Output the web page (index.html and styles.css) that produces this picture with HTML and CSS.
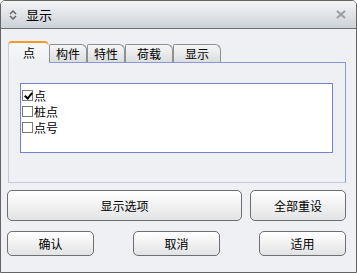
FILE: index.html
```html
<!DOCTYPE html>
<html lang="zh">
<head>
    <meta charset="UTF-8">
    <title>显示</title>
    <link rel="stylesheet" href="styles.css">
</head>
<body>
<div class="ventana">
    <div class="barraTitulo">
        <svg class="iconoTitulo" width="8" height="10" viewBox="0 0 8 10">
            <path d="M1 4 L4 1 L7 4" fill="none" stroke="#666" stroke-width="1.5"/>
            <path d="M1 6 L4 9 L7 6" fill="none" stroke="#666" stroke-width="1.5"/>
        </svg>
        <span class="titulo">显示</span>
        <svg class="cerrar" width="10" height="9" viewBox="0 0 10 9">
            <path d="M1 1 L9 8 M9 1 L1 8" stroke="#9a9da2" stroke-width="2"/>
        </svg>
    </div>

    <div class="contenido">
        <!-- pestañas -->
        <div class="pestanas">
            <div class="pestana activa w41">点</div>
            <div class="pestana w38">构件</div>
            <div class="pestana w38">特性</div>
            <div class="pestana w48">荷载</div>
            <div class="pestana w48">显示</div>
        </div>
        <div class="panel">
            <div class="lista">
                <label class="item"><span class="check marcado"></span>点</label>
                <label class="item"><span class="check"></span>桩点</label>
                <label class="item"><span class="check"></span>点号</label>
            </div>
        </div>

        <div class="fila1">
            <button class="boton ancho">显示选项</button>
            <button class="boton medio">全部重设</button>
        </div>
        <div class="fila2">
            <button class="boton chico">确认</button>
            <button class="boton chico">取消</button>
            <button class="boton chico">适用</button>
        </div>
    </div>
</div>
</body>
</html>
```

FILE: styles.css
```css
body {
    margin: 0;
    font-family: "Noto Sans CJK SC", "Liberation Sans", sans-serif;
    font-size: 12px;
    color: #000;
}

.ventana {
    width: 357px;
    height: 273px;
    box-sizing: border-box;
    border: 1px solid #646464;
    border-radius: 5px 5px 0 0;
    background: #eef0f3;
    overflow: hidden;
}

.barraTitulo {
    height: 27px;
    display: flex;
    align-items: center;
    padding: 0 10px 0 8px;
    background: linear-gradient(#f3f4f6, #e2e5e9 45%, #cdd2d8);
    border-bottom: 1px solid #6e6e6e;
}

.titulo {
    margin-left: 9px;
    font-size: 13px;
    flex: 1;
}

.contenido {
    padding: 12px 10px 0 6px;
}

.pestanas {
    display: flex;
    align-items: flex-end;
    height: 21px;
    padding-left: 1px;
}

.pestana {
    height: 18px;
    box-sizing: border-box;
    border: 1px solid #8c8f94;
    border-bottom: none;
    border-radius: 2px 6px 0 0;
    background: linear-gradient(#f6f6f6, #dcdde0);
    text-align: center;
    line-height: 17px;
    font-size: 12px;
}

.pestana.activa {
    height: 22px;
    border: none;
    border-top: 2px solid #f39a2b;
    border-left: 1px solid #c9ccd2;
    border-radius: 4px 5px 0 0;
    background: linear-gradient(#f7f8f9, #eef0f3);
    line-height: 19px;
    position: relative;
    z-index: 1;
    margin-bottom: -1px;
}

.w41 { width: 41px; }
.w38 { width: 38px; }
.w48 { width: 48px; }

.panel {
    height: 121px;
    box-sizing: border-box;
    margin-left: 1px;
    border: 1px solid #8b98d4;
    border-left-color: #c6cad6;
    border-bottom-color: #c8cedf;
    padding: 20px 12px 0 11px;
}

.lista {
    height: 70px;
    box-sizing: border-box;
    background: #fff;
    border: 1px solid #7282d2;
    padding: 3px 0 0 1px;
}

.item {
    display: flex;
    align-items: center;
    height: 16px;
    font-size: 12px;
}

.check {
    width: 11px;
    height: 11px;
    box-sizing: border-box;
    border: 1px solid #7a7a7a;
    background: #fff;
    margin-right: 1px;
    position: relative;
}

.check.marcado::after {
    content: "";
    position: absolute;
    left: 3px;
    top: 0px;
    width: 3px;
    height: 6px;
    border-right: 2px solid #000;
    border-bottom: 2px solid #000;
    transform: rotate(40deg);
}

.fila1 {
    display: flex;
    justify-content: space-between;
    margin-top: 7px;
}

.fila2 {
    display: flex;
    justify-content: space-between;
    margin-top: 10px;
}

.boton {
    font-family: "Noto Sans CJK SC", "Liberation Sans", sans-serif;
    font-size: 12px;
    color: #000;
    border: 1px solid #6f6f6f;
    border-radius: 5px;
    background: linear-gradient(#ffffff, #f1f1f1 50%, #e2e3e5);
    padding: 0;
}

.ancho { width: 235px; height: 31px; }
.medio { width: 96px; height: 31px; }
.chico { width: 87px; height: 25px; }
```
